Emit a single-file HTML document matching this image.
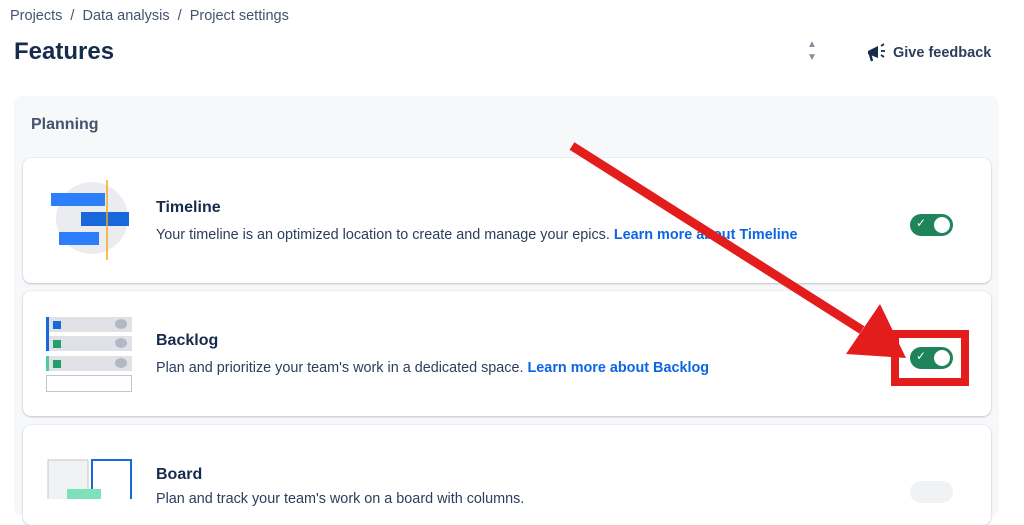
<!DOCTYPE html>
<html><head><style>
*{margin:0;padding:0;box-sizing:border-box}
body{width:1024px;height:497px;overflow:hidden;background:#fff;font-family:"Liberation Sans",sans-serif;color:#172b4d;position:relative}
.a{position:absolute}
.card{position:absolute;left:23px;width:968px;background:#fff;border-radius:8px;box-shadow:0 1px 2px rgba(9,30,66,.2),0 0 1px rgba(9,30,66,.2)}
.t{position:absolute;left:133px;font-weight:bold;font-size:16px}
.d{position:absolute;left:133px;font-size:14.4px;color:#2c3e5d;white-space:nowrap}
.d b{color:#0c66e4}
.tog{position:absolute;left:887px;width:43px;height:22px;border-radius:11px;background:#1f845a}
.tog:after{content:"";position:absolute;right:3px;top:3px;width:16px;height:16px;border-radius:50%;background:#fff}
.tog span{position:absolute;left:6px;top:2px;color:#fff;font-size:12px}
</style></head><body>
<div class="a" style="left:10px;top:8px;font-size:14.5px;color:#44546f">Projects &nbsp;/&nbsp; Data analysis &nbsp;/&nbsp; Project settings</div>
<div class="a" style="left:14px;top:38px;font-size:24px;font-weight:bold">Features</div>
<div class="a" style="left:807px;top:38px;font-size:10px;color:#8590a2;line-height:13px">▲<br>▼</div>
<svg class="a" style="left:866px;top:43px" width="22" height="20" viewBox="0 0 22 20"><path d="M2 8 L12 3 L12 15 L2 11 Z" fill="#172b4d"/><path d="M4 11 L6 18" stroke="#172b4d" stroke-width="2.5"/><path d="M15 3 L18 1 M15 8 L19 8 M15 12 L18 14" stroke="#172b4d" stroke-width="1.8"/></svg>
<div class="a" style="left:893px;top:45px;font-size:14.5px;font-weight:bold;color:#2c3e5d">Give feedback</div>
<div class="a" style="left:14px;top:96px;width:985px;height:420px;background:#f7f8f9;border-radius:8px"></div>
<div class="a" style="left:31px;top:116px;font-size:16px;font-weight:bold;color:#44546f">Planning</div>

<div class="card" style="top:158px;height:125px">
 <svg class="a" style="left:24px;top:22px" width="84" height="80"><circle cx="45" cy="38" r="36" fill="#ebecf0"/><rect x="4" y="13" width="54" height="13" fill="#2d7ff9"/><rect x="34" y="32" width="48" height="14" fill="#1868db"/><rect x="12" y="52" width="40" height="13" fill="#2d7ff9"/><line x1="60" y1="0" x2="60" y2="80" stroke="#f5a623" stroke-width="1.5"/></svg>
 <div class="t" style="top:41px">Timeline</div>
 <div class="d" style="top:69px">Your timeline is an optimized location to create and manage your epics. <b>Learn more about Timeline</b></div>
 <div class="tog" style="top:56px"><span>✓</span></div>
</div>
<div class="card" style="top:291px;height:125px">
 <svg class="a" style="left:23px;top:26px" width="88" height="76"><g fill="#dfe1e6"><rect x="0" y="0" width="86" height="15"/><rect x="0" y="19" width="86" height="15"/><rect x="0" y="39" width="86" height="15"/></g><rect x="0" y="0" width="3" height="34" fill="#1868db"/><rect x="0" y="39" width="3" height="15" fill="#4bce97"/><rect x="7" y="4" width="8" height="8" fill="#1868db"/><rect x="7" y="23" width="8" height="8" fill="#22a06b"/><rect x="7" y="43" width="8" height="8" fill="#22a06b"/><g fill="#b3b9c4"><ellipse cx="75" cy="7" rx="6" ry="5"/><ellipse cx="75" cy="26" rx="6" ry="5"/><ellipse cx="75" cy="46" rx="6" ry="5"/></g><rect x="0.5" y="58.5" width="85" height="16" fill="#fff" stroke="#c1c7d0"/></svg>
 <div class="t" style="top:41px">Backlog</div>
 <div class="d" style="top:69px">Plan and prioritize your team's work in a dedicated space. <b>Learn more about Backlog</b></div>
 <div class="tog" style="top:56px"><span>✓</span></div>
</div>
<div class="card" style="top:425px;height:100px">
 <svg class="a" style="left:24px;top:34px" width="86" height="40"><rect x="1" y="1" width="40" height="40" fill="#f1f2f4" stroke="#c1c7d0"/><rect x="45" y="1" width="39" height="40" fill="#fff" stroke="#1868db" stroke-width="2"/><rect x="20" y="30" width="34" height="10" fill="#7ee2b8"/></svg>
 <div class="t" style="top:41px">Board</div>
 <div class="d" style="top:66px">Plan and track your team's work on a board with columns.</div>
 <div class="a" style="left:887px;top:56px;width:43px;height:22px;border-radius:11px;background:#f1f2f4"></div>
</div>

<svg class="a" style="left:0;top:0" width="1024" height="497"><line x1="572" y1="146" x2="862" y2="330" stroke="#e31d1c" stroke-width="9"/><polygon points="906,358 846,354 880,304" fill="#e31d1c"/><rect x="895" y="334" width="70" height="48" fill="none" stroke="#e31d1c" stroke-width="8"/></svg>
</body></html>
